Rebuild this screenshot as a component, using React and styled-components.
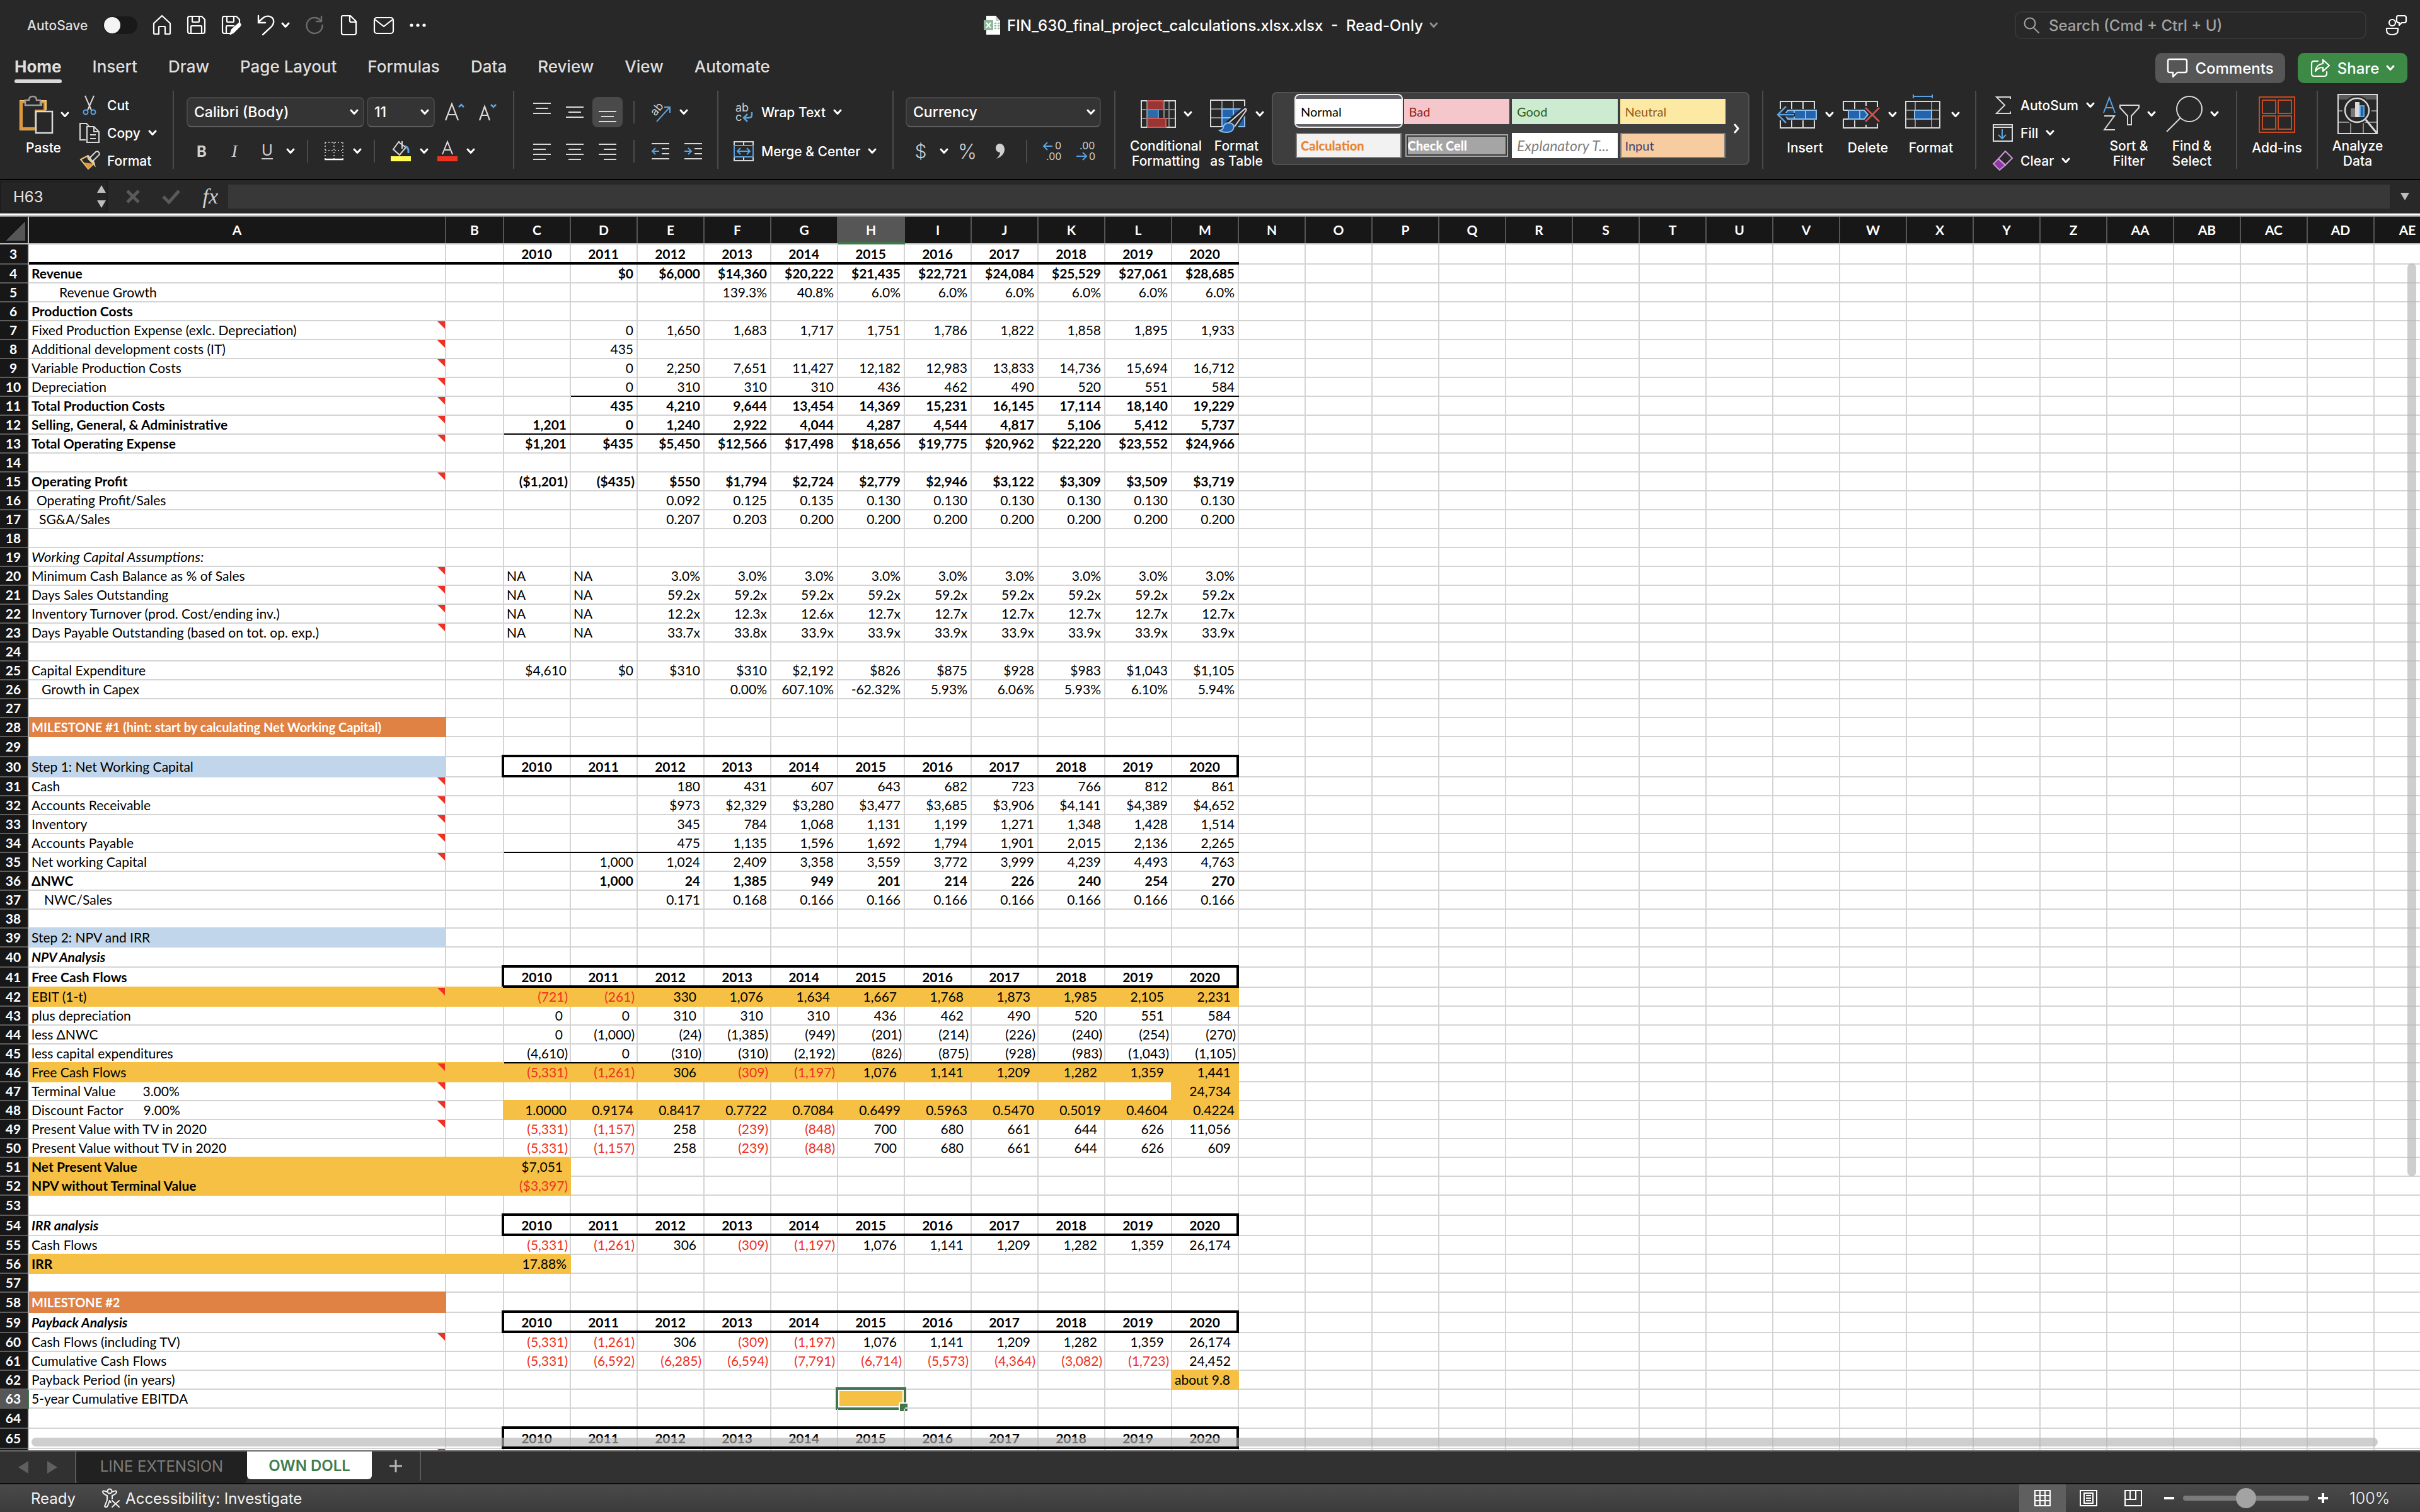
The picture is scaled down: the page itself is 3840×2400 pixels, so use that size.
import React, { useState } from 'react';
import styled, { createGlobalStyle, css } from 'styled-components';

const GlobalStyle = createGlobalStyle`
  * { box-sizing: border-box; }
  body { margin: 0; background: #282828; overflow: hidden; }
  button, input, select { font: inherit; color: inherit; }
`;

const App = styled.div`
  display: flex;
  flex-direction: column;
  height: 100vh;
  color: #fff;
  background: #282828;
  font-family: Inter, 'Liberation Sans', sans-serif;
  font-size: 21px;
  font-weight: 500;
`;

const PlainButton = styled.button`
  display: flex;
  align-items: center;
  justify-content: center;
  flex: none;
  padding: 0;
  border: 0;
  background: none;
  white-space: nowrap;
`;

const Icon = styled.svg`
  display: block;
  flex: none;
  overflow: visible;
  fill: none;
  stroke: ${({ $tone }) => $tone || '#d9d9d9'};
  stroke-width: ${({ $line }) => $line || 2};
`;

/* ---------- title bar ---------- */

const TitleBar = styled.header`
  display: grid;
  grid-template-columns: 1fr auto 1fr;
  align-items: center;
  height: 80px;
  padding: 0 22px 0 43px;
`;

const QuickAccess = styled.div`
  display: flex;
  align-items: center;
  gap: 23px;
`;

const AutoSave = styled.label`
  display: flex;
  align-items: center;
  justify-content: space-between;
  width: 175px;
  color: #dedede;
`;

const Toggle = styled.input`
  appearance: none;
  display: flex;
  width: 54px;
  height: 28px;
  margin: 0;
  border-radius: 14px;
  background: #191919;

  &::before {
    content: '';
    width: 26px;
    height: 26px;
    margin: 1px;
    border-radius: 50%;
    background: #f4f4f4;
  }
`;

const QuickButton = styled(PlainButton)`
  width: 32px;
  height: 36px;
`;

const WithMenu = styled.div`
  display: flex;
  align-items: center;
  gap: 8px;
`;

const DocTitle = styled.h1`
  display: flex;
  align-items: center;
  gap: 10px;
  margin: 0;
  padding-right: 19px;
  font-size: 24px;
  font-weight: 500;
  white-space: pre;
`;

const TitleRight = styled.div`
  display: flex;
  align-items: center;
  justify-content: flex-end;
  gap: 31px;
`;

const SearchBox = styled.label`
  display: flex;
  align-items: center;
  gap: 14px;
  width: 558px;
  height: 44px;
  padding: 0 12px;
  border: 2px solid #363636;
  border-radius: 10px;
  color: #a2a2a2;
  font-size: 24px;
`;

const SearchInput = styled.input`
  flex: 1;
  min-width: 0;
  padding: 0;
  border: 0;
  outline: 0;
  background: none;

  &::placeholder { color: #a2a2a2; opacity: 1; }
`;

/* ---------- tab strip ---------- */

const TabStrip = styled.div`
  display: flex;
  align-items: center;
  justify-content: space-between;
  height: 64px;
  padding: 4px 20px 12px 23px;
`;

const Tabs = styled.nav`
  display: flex;
  gap: 49px;
`;

const Tab = styled(PlainButton)`
  position: relative;
  height: 48px;
  padding-bottom: 6px;
  color: #dedede;
  font-size: 26px;
  font-weight: ${({ $active }) => ($active ? 700 : 500)};

  ${({ $active }) => $active && css`
    &::after {
      content: '';
      position: absolute;
      right: 0;
      bottom: 0;
      left: 0;
      height: 6px;
      border-radius: 3px;
      background: #d9d9d9;
    }
  `}
`;

const Actions = styled.div`
  display: flex;
  gap: 20px;
`;

const ActionButton = styled(PlainButton)`
  gap: 11px;
  width: ${({ $w }) => $w}px;
  height: 48px;
  border-radius: 10px;
  background: ${({ $bg }) => $bg};
  font-size: 24px;
`;

/* ---------- ribbon ---------- */

const Ribbon = styled.div`
  display: flex;
  flex: none;
  height: 140px;
`;

const Group = styled.section`
  display: flex;
  flex: ${({ $w }) => ($w ? `0 0 ${$w}px` : '1')};
  height: 124px;
  padding-left: ${({ $pad }) => $pad || 0}px;
  border-right: 2px solid ${({ $last }) => ($last ? 'transparent' : '#4b4b4b')};
`;

const BigButton = styled(PlainButton)`
  flex-direction: column;
  justify-content: flex-start;
  width: ${({ $w }) => $w || 100}px;
  height: 124px;
  line-height: 24px;
  text-align: center;
  white-space: pre;
`;

const BigIcon = styled.span`
  display: flex;
  align-items: center;
  gap: 11px;
  height: 79px;
  padding-bottom: 3px;
`;

const SmallList = styled.div`
  display: flex;
  flex-direction: column;
  width: ${({ $w }) => $w}px;
  padding-top: 1px;
  padding-left: ${({ $left }) => $left || 0}px;
`;

const SmallButton = styled(PlainButton)`
  justify-content: flex-start;
  gap: 12px;
  height: ${({ $h }) => $h || 44}px;
`;

const IconSlot = styled.span`
  display: flex;
  justify-content: center;
  width: 32px;
`;

const Rows = styled.div`
  display: flex;
  flex-direction: column;
  gap: 14px;
  padding-top: 10px;
`;

const ToolRow = styled.div`
  display: flex;
  align-items: center;
  gap: 4px;
  height: 48px;
`;

const Tool = styled(PlainButton)`
  width: 48px;
  height: 48px;
  border-radius: 8px;
  background: ${({ $active }) => ($active ? '#4a4a4a' : 'none')};
`;

const MenuArrow = styled(PlainButton)`
  width: 18px;
  height: 48px;
`;

const Rule = styled.span`
  width: 2px;
  height: 36px;
  margin: 0 13px;
  background: #4b4b4b;
`;

const SelectBox = styled.label`
  display: flex;
  align-items: center;
  width: ${({ $w }) => $w}px;
  height: 48px;
  margin-right: ${({ $after }) => $after || 0}px;
  padding-right: 7px;
  border: 2px solid #454545;
  border-bottom-color: #5e5e5e;
  border-radius: 8px;
  background: #343434;
`;

const Select = styled.select`
  appearance: none;
  flex: 1;
  min-width: 0;
  padding: 0 0 0 10px;
  border: 0;
  background: none;
  font-size: 23px;
`;

const Gallery = styled.div`
  display: flex;
  flex: 1;
  align-items: center;
  height: 116px;
  margin: 2px 20px 0 4px;
  padding-left: 36px;
  border: 2px solid #525252;
  border-radius: 8px;
  background: #3e3e3e;
`;

const Styles = styled.div`
  position: relative;
  z-index: 0;
  display: grid;
  flex: 1;
  grid-template-columns: repeat(4, 1fr);
  grid-auto-rows: 40px;
  gap: 14px 4px;
`;

const StyleCell = styled.button`
  position: relative;
  padding: 0 0 0 ${({ $border }) => ($border ? 6 : 8)}px;
  border: ${({ $border }) => $border || '0'};
  background: ${({ $bg }) => $bg};
  color: ${({ $ink }) => $ink};
  font-family: Lato, 'Open Sans', sans-serif;
  font-size: ${({ $italic }) => ($italic ? 23 : 20)}px;
  font-weight: ${({ $bold }) => ($bold ? 900 : 400)};
  font-style: ${({ $italic }) => ($italic ? 'italic' : 'normal')};
  text-align: left;
  white-space: nowrap;

  ${({ $double }) => $double && css`
    height: 36px;
    margin: 2px;
    padding-left: 2px;
    box-shadow: inset 0 0 0 2px #3a3a3a;
  `}

  ${({ $selected }) => $selected && css`
    &::before {
      content: '';
      position: absolute;
      inset: -8px -2px -6px;
      z-index: -1;
      border: 2px solid #eee;
      border-radius: 8px;
      background: linear-gradient(#636367 6px, #fff 6px, #fff 46px, #636367 46px);
    }
  `}
`;

const GalleryMore = styled(PlainButton)`
  width: 36px;
  height: 60px;
`;

/* ---------- formula bar ---------- */

const FormulaBar = styled.div`
  display: flex;
  flex: none;
  align-items: center;
  height: 54px;
  border-top: 2px solid #000;
  background: #282828;
`;

const NameBox = styled.div`
  display: flex;
  align-items: center;
  width: 171px;
  height: 50px;
  border: 2px solid #1d1d1d;
  background: #252525;
`;

const NameInput = styled.input`
  flex: 1;
  min-width: 0;
  padding: 0 0 0 19px;
  border: 0;
  background: none;
  color: #e4e4e4;
  font-size: 24px;
  font-weight: 400;
`;

const FormulaButtons = styled.div`
  display: flex;
  justify-content: space-between;
  width: 191px;
  padding: 0 16px 0 28px;
`;

const FormulaInput = styled.input`
  flex: 1;
  height: 38px;
  border: 0;
  background: #383838;
  font-size: 24px;
`;

const ExpandButton = styled(PlainButton)`
  width: 48px;
`;

const Splitter = styled.div`
  flex: none;
  height: 6px;
  border: solid #9b9b9b;
  border-width: 2px 0;
  background: #fff;
`;

/* ---------- sheet ---------- */

const SheetArea = styled.main`
  position: relative;
  flex: 1;
  min-height: 0;
  overflow: hidden;
  background: #fff;
`;

const Sheet = styled.table`
  width: 3874px;
  table-layout: fixed;
  border-spacing: 0;
  color: #000;
  font-family: Lato, 'Open Sans', sans-serif;
  font-size: 21px;
  font-weight: 400;
  line-height: 26px;
`;

const Col = styled.col`
  width: ${({ $w }) => $w}px;
`;

const Row = styled.tr`
  height: ${({ $h }) => $h}px;
`;

const ColumnHead = styled.th`
  padding: 0 2px 2px 0;
  background: ${({ $on }) => ($on ? '#565656' : '#171717')};
  box-shadow: ${({ $on }) => ($on ? 'inset 0 -4px #41764b' : 'inset 0 -2px #b9b9b9, inset -2px 0 #555')};
  color: #fff;
  font-weight: 700;
`;

const Corner = styled.th`
  padding: 0;
  background: linear-gradient(135deg, #171717 50%, #565656 50%) 10px 8px / 30px 30px no-repeat #171717;
  box-shadow: inset 0 -2px #b9b9b9, inset -2px 0 #b9b9b9;
`;

const RowHead = styled.th`
  padding: 0 4px 2px 0;
  background: ${({ $on }) => ($on ? '#565656' : '#171717')};
  box-shadow: inset -2px 0 ${({ $on }) => ($on ? '#41764b' : '#b9b9b9')}, inset 0 -2px #5c5c5c;
  color: #fff;
  font-weight: 700;
`;

const Cell = styled.td`
  position: relative;
  padding: 0 ${({ $right }) => $right || 7}px 2px ${({ $left }) => $left || 4}px;
  background: ${({ $fill }) => $fill || 'none'};
  box-shadow: ${({ $edges }) => $edges};
  color: ${({ $ink }) => $ink || '#000'};
  font-size: ${({ $size }) => $size || 21}px;
  font-weight: ${({ $bold }) => ($bold ? 700 : 400)};
  font-style: ${({ $italic }) => ($italic ? 'italic' : 'normal')};
  text-align: ${({ $align }) => $align || 'left'};
  white-space: pre;
`;

const NoteMark = styled.span`
  position: absolute;
  top: 0;
  right: 2px;
  width: 12px;
  height: 12px;
  background: #ee3124;
  clip-path: polygon(0 0, 100% 0, 100% 100%);
`;

const Selection = styled.span`
  position: absolute;
  inset: -4px -2px -2px -4px;
  border: 4px solid #41764b;
  box-shadow: inset 0 0 0 2px #fff;

  &::after {
    content: '';
    position: absolute;
    right: -6px;
    bottom: -6px;
    width: 12px;
    height: 12px;
    border: solid #fff;
    border-width: 2px 0 0 2px;
    background: #41764b;
  }
`;

const ScrollThumb = styled.div`
  position: absolute;
  border-radius: 7px;
  background: rgba(179, 179, 179, 0.65);
  ${({ $vertical }) => ($vertical
    ? 'top: 74px; right: 6px; width: 14px; height: 74%;'
    : 'right: 67px; bottom: 6px; left: 50px; height: 14px;')}
`;

/* ---------- footer ---------- */

const SheetTabs = styled.div`
  display: flex;
  flex: none;
  height: 52px;
  border-top: 2px solid #6a6a6a;
  background: #313131;
`;

const SheetNav = styled.div`
  display: flex;
  align-items: center;
  gap: 30px;
  width: 121px;
  padding-left: 29px;
  border-right: 2px solid #5a5a5a;
`;

const SheetTab = styled(PlainButton)`
  width: ${({ $w }) => $w}px;
  height: ${({ $active }) => ($active ? 44 : 50)}px;
  padding-bottom: ${({ $active }) => ($active ? 0 : 4)}px;
  border-radius: 0 0 6px 6px;
  background: ${({ $active }) => ($active ? '#fff' : '#212121')};
  color: ${({ $active }) => ($active ? '#3f7d50' : '#7d7d7d')};
  font-size: 24px;
  font-weight: ${({ $active }) => ($active ? 600 : 400)};
`;

const AddSheet = styled(PlainButton)`
  width: 78px;
  height: 46px;
  border-right: 2px solid #5a5a5a;
`;

const StatusBar = styled.footer`
  display: flex;
  flex: none;
  align-items: center;
  justify-content: space-between;
  height: 46px;
  padding-left: 49px;
  border-top: 2px solid #0c0c0c;
  background: linear-gradient(#4a4a4a, #3b3b3b);
  color: #f2f2f2;
  font-size: 24px;
  font-weight: 400;
`;

const StatusLeft = styled.div`
  display: flex;
  align-items: center;
  gap: 40px;
`;

const AccessButton = styled(PlainButton)`
  gap: 7px;
`;

const StatusRight = styled.div`
  display: flex;
  align-items: center;
  height: 100%;
  padding-right: 48px;
`;

const ViewButton = styled(PlainButton)`
  width: ${({ $w }) => $w || 71}px;
  height: 100%;
  background: ${({ $active }) => ($active ? '#5f5f5f' : 'none')};
`;

const ZoomButton = styled(PlainButton)`
  width: 44px;
  height: 44px;
`;

const ZoomSlider = styled.input`
  appearance: none;
  width: 200px;
  height: 8px;
  margin: 0;
  border-radius: 4px;
  background: #7b7b7b;

  &::-webkit-slider-thumb {
    appearance: none;
    width: 32px;
    height: 32px;
    border-radius: 50%;
    background: #a3a3a3;
  }
`;

const ZoomValue = styled.output`
  width: 84px;
  padding-left: 20px;
  font-size: 25px;
  font-weight: 300;
`;

/* ---------- icons ---------- */

const BLUE = '#5aa2e0';
const DEEP = '#2464ae';

const Chevron = ({ tone = '#fff' }) => (
  <Icon width="14" height="10" $tone={tone} $line={3} strokeLinecap="round" strokeLinejoin="round">
    <path d="M2 2 7 7.5 12 2" />
  </Icon>
);

const HomeIcon = () => (
  <Icon width="32" height="34" $tone="#fff" $line={2.2} strokeLinejoin="round">
    <path d="M3 14 16 2l13 12v16q0 1-1 1h-7V20q0-1-1-1h-8q-1 0-1 1v11H4q-1 0-1-1z" />
  </Icon>
);

const SaveIcon = ({ pen }) => (
  <Icon width="32" height="34" $tone="#fff" $line={2.2} strokeLinejoin="round">
    <path d={pen ? 'M16 30H5q-3 0-3-3V6q0-3 3-3h19l5 5v8' : 'M5 3h19l5 5v19q0 3-3 3H5q-3 0-3-3V6q0-3 3-3z'} />
    <path d="M9 3v8q0 1 1 1h9q1 0 1-1V3" />
    <path d={pen ? 'M8 30V19q0-1 1-1h12' : 'M7 30V19q0-1 1-1h15q1 0 1 1v11'} />
    {pen && <path d="m14 32 2-8 11-10q3-1 4 1t-1 4L20 29z" fill="#fff" strokeWidth="1" />}
  </Icon>
);

const UndoIcon = () => (
  <Icon width="30" height="34" $tone="#fff" $line={2.4} strokeLinecap="round">
    <path d="M3 2v11h11M3 12l8-7c5-4 14-3 16 4 1 5-1 8-4 11L10 32" />
  </Icon>
);

const RedoIcon = () => (
  <Icon width="32" height="34" $tone="#6c6c6c" $line={2.4} strokeLinecap="round">
    <path d="M27 3v8h-8M26 10A12.500 12.500 0 1 0 28.500 17" />
  </Icon>
);

const FileIcon = () => (
  <Icon width="28" height="34" $tone="#fff" $line={2.2} strokeLinejoin="round">
    <path d="M4 2h12l9 9v18q0 3-3 3H5q-3 0-3-3V4q0-2 2-2zM15 2v8q0 2 2 2h8" />
  </Icon>
);

const MailIcon = () => (
  <Icon width="34" height="30" $tone="#fff" $line={2.2} strokeLinejoin="round">
    <rect x="2" y="3" width="30" height="25" rx="4" />
    <path d="m3 6 14 11L31 6" />
  </Icon>
);

const DotsIcon = () => (
  <Icon width="28" height="6" $tone="none">
    {[3, 13, 23].map((x) => <circle key={x} cx={x} cy="3" r="2.600" fill="#fff" />)}
  </Icon>
);

const ExcelIcon = () => (
  <Icon width="28" height="32" $tone="none">
    <path d="M5 1h15l7 8v22H5z" fill="#fff" />
    <path d="M20 1v8h7" fill="#c9c9c9" />
    <rect x="1" y="8" width="15" height="16" rx="1" fill="#8fb89a" />
    <path d="m5 12 7 8m0-8-7 8" stroke="#fff" strokeWidth="2" />
    <path d="M18 13h3m2 0h3m-8 4h3m2 0h3m-8 4h3m2 0h3" stroke="#8fb89a" strokeWidth="2.400" />
  </Icon>
);

const SearchIcon = () => (
  <Icon width="26" height="26" $tone="#a2a2a2" $line={2} strokeLinecap="round">
    <circle cx="10" cy="10" r="8.500" />
    <path d="m16 17 8 8" />
  </Icon>
);

const PeopleIcon = () => (
  <Icon width="36" height="34" $tone="#fff" $line={2.2} strokeLinejoin="round">
    <circle cx="12" cy="13" r="5" />
    <path d="M3 22h18v3q0 7-9 7t-9-7z" />
    <path d="M21 2h10q3 0 3 3v5q0 3-3 3h-4l-4 4v-4q-4 0-4-3V5q0-3 2-3z" />
  </Icon>
);

const CommentIcon = () => (
  <Icon width="34" height="32" $tone="#fff" $line={2.4} strokeLinejoin="round">
    <path d="M5 2h24q3 0 3 3v15q0 3-3 3H17l-7 7v-7H5q-3 0-3-3V5q0-3 3-3z" />
  </Icon>
);

const ShareIcon = () => (
  <Icon width="32" height="30" $tone="#fff" $line={2.2} strokeLinejoin="round" strokeLinecap="round">
    <path d="M12 4H6Q2 4 2 8v16q0 4 4 4h16q4 0 4-4v-3" />
    <path d="M20 2v6C12 9 9 13 8 20c3-4 6-6 12-6v6l10-9z" />
  </Icon>
);

const PasteIcon = () => (
  <Icon width="56" height="62">
    <path d="M26 55H3V9h10" stroke="#f3c97c" />
    <path d="M5 11h9v4h22v-4h6v14H28v28H5z" fill="none" stroke="#dd9a3c" strokeWidth="4" />
    <path d="M32 9h12v15" stroke="#f3c97c" />
    <path d="M11 16V8h6q0-6 6-6t6 6h6v8z" fill="#282828" stroke="#9a9a9a" strokeWidth="2.500" />
    <rect x="28" y="26" width="26" height="34" fill="#282828" strokeWidth="2.500" />
  </Icon>
);

const CutIcon = () => (
  <Icon width="24" height="32">
    <path d="M5 1l10 23M19 1 9 24" />
    <circle cx="6" cy="27" r="3.500" stroke={BLUE} />
    <circle cx="18" cy="27" r="3.500" stroke={BLUE} />
  </Icon>
);

const CopyIcon = () => (
  <Icon width="34" height="34">
    <path d="M11 28H2V2h10l4 4" />
    <path d="M13 7h11l8 8v17H13zM24 7v8h8M18 20h9m-9 6h9" />
  </Icon>
);

const BrushIcon = () => (
  <Icon width="32" height="32">
    <path d="M17 11 26 2q3-2 5 1t-1 5l-8 8 2 7-10-10z" />
    <path d="M13 7 24 21" />
    <path d="M12 9 2 14l12 15 9-8z" stroke="#f3c97c" />
    <path d="m7 19 16 2-9 8z" fill="#dd9a3c" stroke="none" />
  </Icon>
);

const GrowIcon = ({ down }) => (
  <Icon width="34" height="30" $line={2.2}>
    <path d={down ? 'M4 28 12 6l8 22M7 20h10' : 'M2 28 12 2l10 26M6 19h12'} />
    <path d={down ? 'm22 3 4 4 4-4' : 'm23 7 4-4 4 4'} stroke={BLUE} strokeWidth="2.600" />
  </Icon>
);

const Glyph = styled.span`
  font-family: ${({ $serif }) => ($serif ? "'Liberation Serif', serif" : 'inherit')};
  font-size: ${({ $size }) => $size || 24}px;
  font-weight: ${({ $weight }) => $weight || 400};
  font-style: ${({ $italic }) => ($italic ? 'italic' : 'normal')};
  color: #d0d0d0;
  ${({ $under }) => $under && 'border-bottom: 2px solid #d0d0d0; line-height: 24px;'}
`;

const BorderIcon = () => (
  <Icon width="30" height="32">
    <path d="M1 2h28M1 15h28M1 2v26M15 2v26M29 2v26" strokeDasharray="2 3" strokeWidth="1.500" />
    <path d="M0 29h30" stroke="#fff" strokeWidth="2.500" />
  </Icon>
);

const FillIcon = () => (
  <Icon width="34" height="34">
    <path d="M13 3 5 14l10 9 10-12L14 3V1M19 1v12" />
    <path d="M24 9q6 2 5 11" stroke={BLUE} strokeWidth="3" />
    <rect x="1" y="25" width="32" height="8" fill="#fffd54" stroke="none" />
  </Icon>
);

const InkIcon = () => (
  <Icon width="34" height="34">
    <path d="M9 22 17 2l8 20M12 15h10" />
    <rect x="1" y="25" width="32" height="8" fill="#ea3323" stroke="none" />
  </Icon>
);

const alignLines = {
  top: { y: 7, gap: 8, lines: [[0, 28], [4, 24], [0, 28]] },
  middle: { y: 13, gap: 8, lines: [[0, 28], [4, 24], [0, 28]] },
  bottom: { y: 20, gap: 8, lines: [[0, 28], [4, 24], [0, 28]] },
  left: { y: 10, gap: 8, lines: [[0, 28], [0, 20], [0, 28], [0, 20]] },
  center: { y: 10, gap: 8, lines: [[0, 28], [4, 24], [0, 28], [4, 24]] },
  right: { y: 10, gap: 8, lines: [[0, 28], [8, 28], [0, 28], [8, 28]] },
};

const AlignIcon = ({ kind }) => {
  const { y, gap, lines } = alignLines[kind];
  return (
    <Icon width="28" height="42">
      {lines.map(([a, b], i) => <path key={i} d={`M${a} ${y + i * gap}H${b}`} />)}
    </Icon>
  );
};

const SvgText = styled.text`
  fill: ${({ $tone }) => $tone || '#d0d0d0'};
  stroke: none;
  font-size: ${({ $size }) => $size || 18}px;
  font-weight: 400;
`;

const OrientIcon = () => (
  <Icon width="36" height="34">
    <SvgText transform="translate(10 24) rotate(-50)">ab</SvgText>
    <path d="M12 32 32 10M24 9h9v9" stroke={BLUE} />
  </Icon>
);

const IndentIcon = ({ right }) => (
  <Icon width="30" height="28">
    <path d="M1 2h28M17 10h12M17 18h12M1 26h28" />
    <path d={right ? 'M1 14h11M7 9l5 5-5 5' : 'M13 14H2m5-5-5 5 5 5'} stroke={BLUE} />
  </Icon>
);

const WrapIcon = () => (
  <Icon width="32" height="38">
    <SvgText x="3" y="18">ab</SvgText>
    <SvgText x="3" y="33">c</SvgText>
    <path d="M29 19v4q0 5-5 5h-7m5-6-6 6 6 6" stroke={BLUE} strokeWidth="2.500" />
  </Icon>
);

const MergeIcon = () => (
  <Icon width="32" height="32">
    <path d="M1 1h30v30H1zM16 1v6M16 25v6" />
    <path d="M1 7h30v18H1zM6 16h20M11 11l-5 5 5 5M21 11l5 5-5 5" stroke={BLUE} />
  </Icon>
);

const DecimalIcon = ({ less }) => (
  <Icon width="34" height="38">
    <SvgText x={less ? 7 : 20} y="16" $size={16}>{less ? '.00' : '0'}</SvgText>
    <SvgText x={less ? 22 : 6} y="33" $size={16}>{less ? '0' : '.00'}</SvgText>
    <path d={less ? 'M2 27h16m-6-6 6 6-6 6' : 'M16 11H2m6-6-6 6 6 6'} stroke={BLUE} />
  </Icon>
);

const CondIcon = () => (
  <Icon width="58" height="46">
    <path d="M2 16h54M2 30h54M11 2v42M22 2v42M38 2v42M46 2v42" stroke="#8c8c8c" />
    <rect x="2" y="2" width="54" height="42" />
    <rect x="12" y="2" width="25" height="14" fill="#9a3534" stroke="#cd5b58" />
    <rect x="12" y="16" width="17" height="14" fill="#2f6aa6" stroke="#4f97cb" />
    <rect x="12" y="30" width="29" height="14" fill="#9a3534" stroke="#cd5b58" />
  </Icon>
);

const TableIcon = () => (
  <Icon width="62" height="64">
    <path d="M2 24h54M2 38h54M20 10v42M38 10v42" stroke="#8c8c8c" />
    <rect x="20" y="24" width="36" height="28" fill={DEEP} stroke="#8dbdec" />
    <path d="M20 38h36M38 24v28" stroke="#8dbdec" />
    <path d="M20 52H2V10h54v14" />
    <path d="m31 44 24-21q4-2 4 2L42 52z" fill="#282828" stroke="#282828" strokeWidth="6" />
    <path d="m31 46 25-22q4-1 2 3L40 52" fill="#282828" />
    <path d="M30 46q8 0 9 6-1 9-11 9-8 0-12-3 6-1 6-5 1-6 8-7z" fill={DEEP} stroke="#8dbdec" />
  </Icon>
);

const InsertIcon = () => (
  <Icon width="66" height="46">
    <path d="M6 14V2h54v12M6 32v12h54V32M24 2v12m0 18v12M42 2v12m0 18v12" />
    <path d="M18 16h45v14H18l-5-7z" fill={DEEP} stroke="#8dbdec" />
    <path d="M28 16v14M46 16v14" stroke="#8dbdec" />
    <path d="M6 23h23" stroke="#282828" strokeWidth="6" />
    <path d="M28 23H2M15 10 2 23l13 13" stroke={BLUE} strokeWidth="2.500" />
  </Icon>
);

const DeleteIcon = () => (
  <Icon width="66" height="46">
    <path d="M6 16V2h54v9M6 30v14h54v-7M24 2v12m0 18v12M42 2v7m0 30v5M6 16h10M6 30h10" />
    <path d="M14 16h25l6 7-6 7H14z" fill={DEEP} stroke="#8dbdec" />
    <path d="M32 16v14" stroke="#8dbdec" />
    <path d="m41 12 22 22m0-22L41 34" stroke="#d9534f" strokeWidth="2.500" />
  </Icon>
);

const FormatIcon = () => (
  <Icon width="66" height="66">
    <path d="M5 26h54M5 40h54M20 12v42M46 12v42" stroke="#8c8c8c" />
    <rect x="5" y="12" width="54" height="42" />
    <rect x="19" y="26" width="27" height="14" fill={DEEP} stroke="#8dbdec" />
    <path d="M17 4h30M17 1v6M47 1v6" stroke={BLUE} />
  </Icon>
);

const SumIcon = () => (
  <Icon width="26" height="30">
    <path d="M25 5V2H3l13 13L3 28h22v-3" />
  </Icon>
);

const FillDownIcon = () => (
  <Icon width="32" height="28">
    <path d="M1 1h30v26H1zM1 5h30" />
    <path d="M15 8v15m-6-6 6 6 6-6" stroke={BLUE} />
  </Icon>
);

const ClearIcon = () => (
  <Icon width="32" height="32" $tone="#cf93da">
    <path d="M9 13 1 21l10 10 9-8z" fill="#8b3ba0" />
    <path d="M9 13 20 1l11 11-11 11z" />
  </Icon>
);

const SortIcon = () => (
  <Icon width="60" height="56">
    <path d="M2 26 11 2l9 24M5 18h12" stroke={BLUE} />
    <path d="M3 31h16L3 53h17" />
    <path d="M28 14h30v4L46 31v14h-6V31L28 18z" />
  </Icon>
);

const FindIcon = () => (
  <Icon width="60" height="60">
    <circle cx="38" cy="22" r="20" />
    <path d="M24 36 2 58" />
  </Icon>
);

const AddInsIcon = () => (
  <Icon width="58" height="58" $tone="#c8481f">
    <path d="M1 1h56v56H1zM6 6h21v21H6zM31 6h21v21H31zM6 31h21v21H6zM31 31h21v21H31z" />
  </Icon>
);

const AnalyzeIcon = () => (
  <Icon width="66" height="66">
    <rect x="2" y="2" width="62" height="8" fill="#5c5c5c" stroke="none" />
    <path d="M2 28h62M2 46h62M22 46v18M42 46v18" stroke="#8c8c8c" />
    <rect x="2" y="2" width="62" height="62" />
    <circle cx="32" cy="27" r="19" fill="#282828" stroke="#282828" strokeWidth="8" />
    <path d="M22 24h7v14h-7z" fill="#777" stroke="none" />
    <path d="M29 14h7v24h-7z" fill="#d9d9d9" stroke="none" />
    <path d="M37 20h6v17h-6z" fill={DEEP} stroke={BLUE} />
    <circle cx="32" cy="27" r="19" strokeWidth="2.500" />
    <path d="m46 42 18 22" strokeWidth="3" />
  </Icon>
);

const Triangle = ({ d, w = 14, h = 12, tone = '#bdbdbd' }) => (
  <Icon width={w} height={h} $tone="none"><path d={d} fill={tone} /></Icon>
);

const AccessIcon = () => (
  <Icon width="32" height="32" $tone="#f2f2f2" strokeLinejoin="round" strokeLinecap="round">
    <circle cx="14" cy="5" r="3.500" />
    <path d="M10 6Q3 3 3 6t7 6v7L6 29q3 3 5-1l3-8 2 3M18 6q7-3 7 0t-7 6v5" />
    <path d="m18 20 11 10m0-10L18 30" />
  </Icon>
);

const NormalViewIcon = () => (
  <Icon width="28" height="28" $tone="#fff"><path d="M2 2h24v24H2zM2 10h24M2 18h24M10 2v24M18 2v24" /></Icon>
);

const PageViewIcon = () => (
  <Icon width="28" height="28" $tone="#fff"><path d="M1 2h26v24H1zM7 6h14v16H7zM10 10h8m-8 4h8m-8 4h8" /></Icon>
);

const BreakViewIcon = () => (
  <Icon width="28" height="28" $tone="#fff"><path d="M1 2h26v24H1zM9 2v14M18 2v14H1" /></Icon>
);

/* ---------- data ---------- */

const GOLD = '#f5c043';
const ORANGE = '#df8244';
const SKY = '#c1d6ea';
const RED = '#ee3124';
const YEARS = '2010 2011 2012 2013 2014 2015 2016 2017 2018 2019 2020';

// values fill the columns up to M unless "start" gives the first one (C is 2)
const rows = [
  { n: 3, tall: true, years: true, bar: [0, 12] },
  { n: 4, label: 'Revenue', bold: true, v: '$0 $6,000 $14,360 $20,222 $21,435 $22,721 $24,084 $25,529 $27,061 $28,685' },
  { n: 5, label: 'Revenue Growth', indent: 11, v: '139.3% 40.8% 6.0% 6.0% 6.0% 6.0% 6.0% 6.0%' },
  { n: 6, label: 'Production Costs', bold: true },
  { n: 7, label: 'Fixed Production Expense (exlc. Depreciation)', note: true, v: '0 1,650 1,683 1,717 1,751 1,786 1,822 1,858 1,895 1,933' },
  { n: 8, label: 'Additional development costs (IT)', note: true, v: '435', start: 3 },
  { n: 9, label: 'Variable Production Costs', note: true, v: '0 2,250 7,651 11,427 12,182 12,983 13,833 14,736 15,694 16,712' },
  { n: 10, label: 'Depreciation', note: true, line: 3, v: '0 310 310 310 436 462 490 520 551 584' },
  { n: 11, label: 'Total Production Costs', note: true, bold: true, v: '435 4,210 9,644 13,454 14,369 15,231 16,145 17,114 18,140 19,229' },
  { n: 12, label: 'Selling, General, & Administrative', note: true, bold: true, line: 2, v: '1,201 0 1,240 2,922 4,044 4,287 4,544 4,817 5,106 5,412 5,737' },
  { n: 13, label: 'Total Operating Expense', note: true, bold: true, v: '$1,201 $435 $5,450 $12,566 $17,498 $18,656 $19,775 $20,962 $22,220 $23,552 $24,966' },
  { n: 14 },
  { n: 15, label: 'Operating Profit', note: true, bold: true, v: '($1,201) ($435) $550 $1,794 $2,724 $2,779 $2,946 $3,122 $3,309 $3,509 $3,719' },
  { n: 16, label: 'Operating Profit/Sales', indent: 2, v: '0.092 0.125 0.135 0.130 0.130 0.130 0.130 0.130 0.130' },
  { n: 17, label: 'SG&A/Sales', indent: 3, v: '0.207 0.203 0.200 0.200 0.200 0.200 0.200 0.200 0.200' },
  { n: 18 },
  { n: 19, label: 'Working Capital Assumptions:', italic: true, size: 22 },
  { n: 20, label: 'Minimum Cash Balance as % of Sales', note: true, v: 'NA NA 3.0% 3.0% 3.0% 3.0% 3.0% 3.0% 3.0% 3.0% 3.0%' },
  { n: 21, label: 'Days Sales Outstanding', note: true, v: 'NA NA 59.2x 59.2x 59.2x 59.2x 59.2x 59.2x 59.2x 59.2x 59.2x' },
  { n: 22, label: 'Inventory Turnover (prod. Cost/ending inv.)', note: true, v: 'NA NA 12.2x 12.3x 12.6x 12.7x 12.7x 12.7x 12.7x 12.7x 12.7x' },
  { n: 23, label: 'Days Payable Outstanding (based on tot. op. exp.)', note: true, v: 'NA NA 33.7x 33.8x 33.9x 33.9x 33.9x 33.9x 33.9x 33.9x 33.9x' },
  { n: 24 },
  { n: 25, label: 'Capital Expenditure', v: '$4,610 $0 $310 $310 $2,192 $826 $875 $928 $983 $1,043 $1,105' },
  { n: 26, label: 'Growth in Capex', indent: 4, v: '0.00% 607.10% -62.32% 5.93% 6.06% 5.93% 6.10% 5.94%' },
  { n: 27 },
  { n: 28, label: 'MILESTONE #1 (hint: start by calculating Net Working Capital)', bold: true, size: 20, ink: '#fff', fill: ORANGE, span: [0, 0] },
  { n: 29, tall: true },
  { n: 30, tall: true, label: 'Step 1: Net Working Capital', fill: SKY, span: [0, 0], years: true, box: true },
  { n: 31, label: 'Cash', note: true, v: '180 431 607 643 682 723 766 812 861' },
  { n: 32, label: 'Accounts Receivable', note: true, v: '$973 $2,329 $3,280 $3,477 $3,685 $3,906 $4,141 $4,389 $4,652' },
  { n: 33, label: 'Inventory', note: true, v: '345 784 1,068 1,131 1,199 1,271 1,348 1,428 1,514' },
  { n: 34, label: 'Accounts Payable', note: true, line: 2, v: '475 1,135 1,596 1,692 1,794 1,901 2,015 2,136 2,265' },
  { n: 35, label: 'Net working Capital', note: true, v: '1,000 1,024 2,409 3,358 3,559 3,772 3,999 4,239 4,493 4,763' },
  { n: 36, label: 'ΔNWC', bold: true, v: '1,000 24 1,385 949 201 214 226 240 254 270' },
  { n: 37, label: 'NWC/Sales', indent: 5, v: '0.171 0.168 0.166 0.166 0.166 0.166 0.166 0.166 0.166' },
  { n: 38 },
  { n: 39, label: 'Step 2: NPV and IRR', fill: SKY, span: [0, 0] },
  { n: 40, tall: true, label: 'NPV Analysis', bold: true, italic: true },
  { n: 41, tall: true, label: 'Free Cash Flows', bold: true, years: true, box: true },
  { n: 42, label: 'EBIT (1-t)', note: true, fill: GOLD, span: [0, 12], acct: true, red: true, v: '(721) (261) 330 1,076 1,634 1,667 1,768 1,873 1,985 2,105 2,231' },
  { n: 43, label: 'plus depreciation', acct: true, v: '0 0 310 310 310 436 462 490 520 551 584' },
  { n: 44, label: 'less ΔNWC', acct: true, v: '0 (1,000) (24) (1,385) (949) (201) (214) (226) (240) (254) (270)' },
  { n: 45, label: 'less capital expenditures', acct: true, line: 2, v: '(4,610) 0 (310) (310) (2,192) (826) (875) (928) (983) (1,043) (1,105)' },
  { n: 46, label: 'Free Cash Flows', note: true, fill: GOLD, span: [0, 12], acct: true, red: true, v: '(5,331) (1,261) 306 (309) (1,197) 1,076 1,141 1,209 1,282 1,359 1,441' },
  { n: 47, label: 'Terminal Value        3.00%', note: true, fill: GOLD, span: [12, 12], acct: true, v: '24,734' },
  { n: 48, label: 'Discount Factor      9.00%', note: true, fill: GOLD, span: [2, 12], v: '1.0000 0.9174 0.8417 0.7722 0.7084 0.6499 0.5963 0.5470 0.5019 0.4604 0.4224' },
  { n: 49, label: 'Present Value with TV in 2020', note: true, acct: true, red: true, v: '(5,331) (1,157) 258 (239) (848) 700 680 661 644 626 11,056' },
  { n: 50, label: 'Present Value without TV in 2020', acct: true, red: true, v: '(5,331) (1,157) 258 (239) (848) 700 680 661 644 626 609' },
  { n: 51, label: 'Net Present Value', boldLabel: true, fill: GOLD, span: [0, 2], acct: true, v: '$7,051', start: 2 },
  { n: 52, label: 'NPV without Terminal Value', boldLabel: true, fill: GOLD, span: [0, 2], acct: true, red: true, v: '($3,397)', start: 2 },
  { n: 53, tall: true },
  { n: 54, tall: true, label: 'IRR analysis', bold: true, italic: true, years: true, box: true },
  { n: 55, label: 'Cash Flows', acct: true, red: true, v: '(5,331) (1,261) 306 (309) (1,197) 1,076 1,141 1,209 1,282 1,359 26,174' },
  { n: 56, label: 'IRR', boldLabel: true, fill: GOLD, span: [0, 2], v: '17.88%', start: 2 },
  { n: 57 },
  { n: 58, tall: true, label: 'MILESTONE #2', bold: true, size: 20, ink: '#fff', fill: ORANGE, span: [0, 0] },
  { n: 59, tall: true, label: 'Payback Analysis', bold: true, italic: true, years: true, box: true },
  { n: 60, label: 'Cash Flows (including TV)', note: true, acct: true, red: true, v: '(5,331) (1,261) 306 (309) (1,197) 1,076 1,141 1,209 1,282 1,359 26,174' },
  { n: 61, label: 'Cumulative Cash Flows', acct: true, red: true, v: '(5,331) (6,592) (6,285) (6,594) (7,791) (6,714) (5,573) (4,364) (3,082) (1,723) 24,452' },
  { n: 62, label: 'Payback Period (in years)', fill: GOLD, span: [12, 12], v: 'about_9.8' },
  { n: 63, label: '5-year Cumulative EBITDA', fill: GOLD, span: [7, 7], selected: 7 },
  { n: 64, tall: true },
  { n: 65, tall: true, years: true, box: true },
  { n: 66, note: true },
];

const columns = 'A B C D E F G H I J K L M N O P Q R S T U V W X Y Z AA AB AC AD AE'.split(' ');
const columnWidth = { A: 662, B: 92 };

const inside = (range, c) => Boolean(range) && c >= range[0] && c <= range[1];

// grid lines and ruled borders are shadows, so black rules stay unbroken across cells
const edgesFor = (row, above, c) => {
  const edges = [];
  const ruled = above && ((above.line && inside([above.line, 12], c)) || (above.box && inside([2, 12], c)));
  if (row.box && inside([2, 12], c)) {
    edges.push('0 -4px #000', 'inset 0 -4px #000');
    if (c === 2) edges.push('-4px 0 #000', '-4px -4px #000');
    if (c === 12) edges.push('inset -4px 0 #000');
  }
  if (inside(row.bar, c)) edges.push('inset 0 -4px #000');
  if (row.line && inside([row.line, 12], c)) edges.push('inset 0 -2px #000');
  if (inside(row.span, c)) {
    if (!ruled) edges.push(c === 0 ? `0 -2px ${row.fill}` : `-2px -2px ${row.fill}`);
    if (c > 0) edges.push(`-2px 0 ${row.fill}`);
  } else {
    edges.push('inset -2px 0 #d4d4d4', 'inset 0 -2px #d4d4d4');
  }
  return edges.join(', ');
};

const SheetRow = ({ row, above }) => {
  const values = row.years ? YEARS.split(' ') : (row.v || '').split(' ').filter(Boolean);
  const start = row.start || 13 - values.length;

  return (
    <Row $h={row.tall ? 32 : 30}>
      <RowHead scope="row" $on={row.selected}>{row.n}</RowHead>
      {columns.map((name, c) => {
        const edges = edgesFor(row, above, c);
        const fill = inside(row.span, c) ? row.fill : undefined;
        if (c === 0) {
          return (
            <Cell
              key={name}
              $edges={edges}
              $fill={fill}
              $ink={row.ink}
              $size={row.size}
              $bold={row.bold || row.boldLabel}
              $italic={row.italic}
              $left={4 + (row.indent || 0) * 4}
            >
              {row.label}
              {row.note && <NoteMark />}
            </Cell>
          );
        }
        const value = (values[c - start] || '').replace('_', ' ');
        const negative = value.startsWith('(');
        const text = /^[a-zN]/.test(value);
        let align = 'right';
        if (row.years) align = 'center';
        if (text) align = 'left';
        let right = 7;
        if (row.acct) right = 13;
        if (negative) right = 5;
        return (
          <Cell
            key={name}
            $edges={edges}
            $fill={fill}
            $ink={row.red && negative ? RED : undefined}
            $bold={row.bold || row.years}
            $align={align}
            $right={right}
          >
            {value}
            {row.selected === c && <Selection />}
          </Cell>
        );
      })}
    </Row>
  );
};

const tabs = ['Home', 'Insert', 'Draw', 'Page Layout', 'Formulas', 'Data', 'Review', 'View', 'Automate'];

const Big = ({ w, icon, label, menu = true }) => (
  <BigButton $w={w}>
    <BigIcon>
      {icon}
      {menu && <Chevron />}
    </BigIcon>
    {label}
  </BigButton>
);

const Small = ({ icon, label, menu, h }) => (
  <SmallButton $h={h}>
    <IconSlot>{icon}</IconSlot>
    {label}
    {menu && <Chevron />}
  </SmallButton>
);

const Dropdown = ({ w, after, label, value }) => (
  <SelectBox $w={w} $after={after}>
    <Select aria-label={label} defaultValue={value}>
      <option>{value}</option>
    </Select>
    <Chevron />
  </SelectBox>
);

const Menu = () => <MenuArrow aria-label="More"><Chevron /></MenuArrow>;

const Excel = () => {
  const [zoom, setZoom] = useState(100);

  return (
    <App>
      <GlobalStyle />
      <TitleBar>
        <QuickAccess>
          <AutoSave>
            AutoSave
            <Toggle type="checkbox" />
          </AutoSave>
          <QuickButton aria-label="Home"><HomeIcon /></QuickButton>
          <QuickButton aria-label="Save"><SaveIcon /></QuickButton>
          <QuickButton aria-label="Save as"><SaveIcon pen /></QuickButton>
          <WithMenu>
            <QuickButton aria-label="Undo"><UndoIcon /></QuickButton>
            <PlainButton aria-label="Undo list"><Chevron /></PlainButton>
          </WithMenu>
          <QuickButton aria-label="Redo"><RedoIcon /></QuickButton>
          <QuickButton aria-label="New"><FileIcon /></QuickButton>
          <QuickButton aria-label="Mail"><MailIcon /></QuickButton>
          <QuickButton aria-label="More"><DotsIcon /></QuickButton>
        </QuickAccess>
        <DocTitle>
          <ExcelIcon />
          {'FIN_630_final_project_calculations.xlsx.xlsx  -  Read-Only'}
          <Chevron tone="#8e8e8e" />
        </DocTitle>
        <TitleRight>
          <SearchBox>
            <SearchIcon />
            <SearchInput type="text" placeholder="Search (Cmd + Ctrl + U)" />
          </SearchBox>
          <QuickButton aria-label="People"><PeopleIcon /></QuickButton>
        </TitleRight>
      </TitleBar>

      <TabStrip>
        <Tabs>
          {tabs.map((name) => <Tab key={name} $active={name === 'Home'}>{name}</Tab>)}
        </Tabs>
        <Actions>
          <ActionButton $w={206} $bg="#565656">
            <CommentIcon />
            Comments
          </ActionButton>
          <ActionButton $w={174} $bg="#3d8a47">
            <ShareIcon />
            Share
            <Chevron />
          </ActionButton>
        </Actions>
      </TabStrip>

      <Ribbon>
        <Group $w={276} $pad={20}>
          <Big w={98} icon={<PasteIcon />} label="Paste" />
          <SmallList $w={150} $left={8}>
            <Small icon={<CutIcon />} label="Cut" />
            <Small icon={<CopyIcon />} label="Copy" menu />
            <Small icon={<BrushIcon />} label="Format" />
          </SmallList>
        </Group>

        <Group $w={540} $pad={20}>
          <Rows>
            <ToolRow>
              <Dropdown w={282} label="Font" value="Calibri (Body)" />
              <Dropdown w={108} label="Font size" value="11" after={4} />
              <Tool aria-label="Grow font"><GrowIcon /></Tool>
              <Tool aria-label="Shrink font"><GrowIcon down /></Tool>
            </ToolRow>
            <ToolRow>
              <Tool aria-label="Bold"><Glyph $weight={700}>B</Glyph></Tool>
              <Tool aria-label="Italic"><Glyph $serif $italic $size={28}>I</Glyph></Tool>
              <Tool aria-label="Underline"><Glyph $under>U</Glyph></Tool>
              <Menu />
              <Rule />
              <Tool aria-label="Borders"><BorderIcon /></Tool>
              <Menu />
              <Rule />
              <Tool aria-label="Fill colour"><FillIcon /></Tool>
              <Menu />
              <Tool aria-label="Font colour"><InkIcon /></Tool>
              <Menu />
            </ToolRow>
          </Rows>
        </Group>

        <Group $w={324} $pad={20}>
          <Rows>
            <ToolRow>
              <Tool aria-label="Top"><AlignIcon kind="top" /></Tool>
              <Tool aria-label="Middle"><AlignIcon kind="middle" /></Tool>
              <Tool aria-label="Bottom" $active><AlignIcon kind="bottom" /></Tool>
              <Rule />
              <Tool aria-label="Orientation"><OrientIcon /></Tool>
              <Menu />
            </ToolRow>
            <ToolRow>
              <Tool aria-label="Left"><AlignIcon kind="left" /></Tool>
              <Tool aria-label="Centre"><AlignIcon kind="center" /></Tool>
              <Tool aria-label="Right"><AlignIcon kind="right" /></Tool>
              <Rule />
              <Tool aria-label="Outdent"><IndentIcon /></Tool>
              <Tool aria-label="Indent"><IndentIcon right /></Tool>
            </ToolRow>
          </Rows>
        </Group>

        <Group $w={278} $pad={24}>
          <Rows>
            <Small h={48} icon={<WrapIcon />} label="Wrap Text" menu />
            <Small h={48} icon={<MergeIcon />} label="Merge & Center" menu />
          </Rows>
        </Group>

        <Group $w={352} $pad={19}>
          <Rows>
            <ToolRow>
              <Dropdown w={310} label="Number format" value="Currency" />
            </ToolRow>
            <ToolRow>
              <Tool aria-label="Currency"><Glyph $size={30} $weight={300}>$</Glyph></Tool>
              <Menu />
              <Tool aria-label="Percent"><Glyph $size={32} $weight={300}>%</Glyph></Tool>
              <Tool aria-label="Comma">
                <Icon width="20" height="28" $tone="none">
                  <path d="M9 2c5 0 8 4 8 9 0 7-5 12-13 15 4-4 6-7 6-10C6 16 3 13 3 9s3-7 6-7z" fill="#d0d0d0" />
                </Icon>
              </Tool>
              <Rule />
              <Tool aria-label="Increase decimal"><DecimalIcon /></Tool>
              <Tool aria-label="Decrease decimal"><DecimalIcon less /></Tool>
            </ToolRow>
          </Rows>
        </Group>

        <Group $pad={20}>
          <Big w={120} icon={<CondIcon />} label={'Conditional\nFormatting'} />
          <Big w={104} icon={<TableIcon />} label={'Format\nas Table'} />
          <Gallery>
            <Styles>
              <StyleCell $selected $bg="none" $ink="#000">Normal</StyleCell>
              <StyleCell $bg="#f5c6cc" $ink="#941f1b">Bad</StyleCell>
              <StyleCell $bg="#cdebd0" $ink="#2b6118">Good</StyleCell>
              <StyleCell $bg="#fce9a3" $ink="#95591c">Neutral</StyleCell>
              <StyleCell $bg="#f2f2f2" $ink="#e98430" $bold $border="2px solid #7f7f7f">Calculation</StyleCell>
              <StyleCell $bg="#a5a5a5" $ink="#fff" $bold $double $border="2px solid #a5a5a5">Check Cell</StyleCell>
              <StyleCell $bg="#fff" $ink="#7f7f7f" $italic>Explanatory T...</StyleCell>
              <StyleCell $bg="#f7cca0" $ink="#3d3f73" $border="2px solid #7f7f7f">Input</StyleCell>
            </Styles>
            <GalleryMore aria-label="More styles">
              <Icon width="10" height="16" $tone="#fff" $line={3} strokeLinecap="round"><path d="m2 2 5 6-5 6" /></Icon>
            </GalleryMore>
          </Gallery>
        </Group>

        <Group $w={338} $pad={16}>
          <Big icon={<InsertIcon />} label="Insert" />
          <Big icon={<DeleteIcon />} label="Delete" />
          <Big icon={<FormatIcon />} label="Format" />
        </Group>

        <Group $w={414} $pad={26}>
          <SmallList $w={166}>
            <Small icon={<SumIcon />} label="AutoSum" menu />
            <Small icon={<FillDownIcon />} label="Fill" menu />
            <Small icon={<ClearIcon />} label="Clear" menu />
          </SmallList>
          <Big icon={<SortIcon />} label={'Sort &\nFilter'} />
          <Big icon={<FindIcon />} label={'Find &\nSelect'} />
        </Group>

        <Group $w={128}>
          <Big w={126} icon={<AddInsIcon />} label="Add-ins" menu={false} />
        </Group>

        <Group $w={162} $last>
          <Big w={126} icon={<AnalyzeIcon />} label={'Analyze\nData'} menu={false} />
        </Group>
      </Ribbon>

      <FormulaBar>
        <NameBox>
          <NameInput aria-label="Name box" defaultValue="H63" />
          <Icon width="16" height="38" $tone="none">
            <path d="M1 13 8 1l7 12zM1 25h14L8 37z" fill="#bdbdbd" />
          </Icon>
        </NameBox>
        <FormulaButtons>
          <PlainButton aria-label="Cancel">
            <Icon width="24" height="24" $tone="#5a5a5a" $line={5}><path d="m3 3 18 18M21 3 3 21" /></Icon>
          </PlainButton>
          <PlainButton aria-label="Enter">
            <Icon width="30" height="24" $tone="#5a5a5a" $line={5}><path d="m2 12 9 9L27 3" /></Icon>
          </PlainButton>
          <PlainButton aria-label="Insert function"><Glyph $serif $italic $size={34}>fx</Glyph></PlainButton>
        </FormulaButtons>
        <FormulaInput aria-label="Formula" />
        <ExpandButton aria-label="Expand"><Triangle d="M0 0h14L7 12z" /></ExpandButton>
      </FormulaBar>
      <Splitter />

      <SheetArea>
        <Sheet>
          <colgroup>
            <Col $w={46} />
            {columns.map((name) => <Col key={name} $w={columnWidth[name] || 106} />)}
          </colgroup>
          <thead>
            <Row $h={44}>
              <Corner aria-label="Select all" />
              {columns.map((name) => <ColumnHead key={name} scope="col" $on={name === 'H'}>{name}</ColumnHead>)}
            </Row>
          </thead>
          <tbody>
            {rows.map((row, i) => <SheetRow key={row.n} row={row} above={rows[i - 1]} />)}
          </tbody>
        </Sheet>
        <ScrollThumb />
        <ScrollThumb $vertical />
      </SheetArea>

      <SheetTabs>
        <SheetNav>
          <PlainButton aria-label="Previous sheet"><Triangle d="M16 0v20L0 10z" w={16} h={20} tone="#5f5f5f" /></PlainButton>
          <PlainButton aria-label="Next sheet"><Triangle d="M0 0v20l16-10z" w={16} h={20} tone="#5f5f5f" /></PlainButton>
        </SheetNav>
        <SheetTab $w={271}>LINE EXTENSION</SheetTab>
        <SheetTab $w={198} $active>OWN DOLL</SheetTab>
        <AddSheet aria-label="Add sheet">
          <Icon width="22" height="22" $tone="#b5b5b5" $line={3}><path d="M11 1v20M1 11h20" /></Icon>
        </AddSheet>
      </SheetTabs>

      <StatusBar>
        <StatusLeft>
          Ready
          <AccessButton>
            <AccessIcon />
            Accessibility: Investigate
          </AccessButton>
        </StatusLeft>
        <StatusRight>
          <ViewButton aria-label="Normal view" $w={74} $active><NormalViewIcon /></ViewButton>
          <ViewButton aria-label="Page layout view"><PageViewIcon /></ViewButton>
          <ViewButton aria-label="Page break preview"><BreakViewIcon /></ViewButton>
          <ZoomButton aria-label="Zoom out">
            <Icon width="16" height="16" $tone="#fff" $line={4}><path d="M0 8h16" /></Icon>
          </ZoomButton>
          <ZoomSlider
            type="range"
            aria-label="Zoom"
            min="0"
            max="200"
            value={zoom}
            onChange={(e) => setZoom(Number(e.target.value))}
          />
          <ZoomButton aria-label="Zoom in">
            <Icon width="16" height="16" $tone="#fff" $line={4}><path d="M0 8h16M8 0v16" /></Icon>
          </ZoomButton>
          <ZoomValue>{`${zoom}%`}</ZoomValue>
        </StatusRight>
      </StatusBar>
    </App>
  );
};

export default Excel;
